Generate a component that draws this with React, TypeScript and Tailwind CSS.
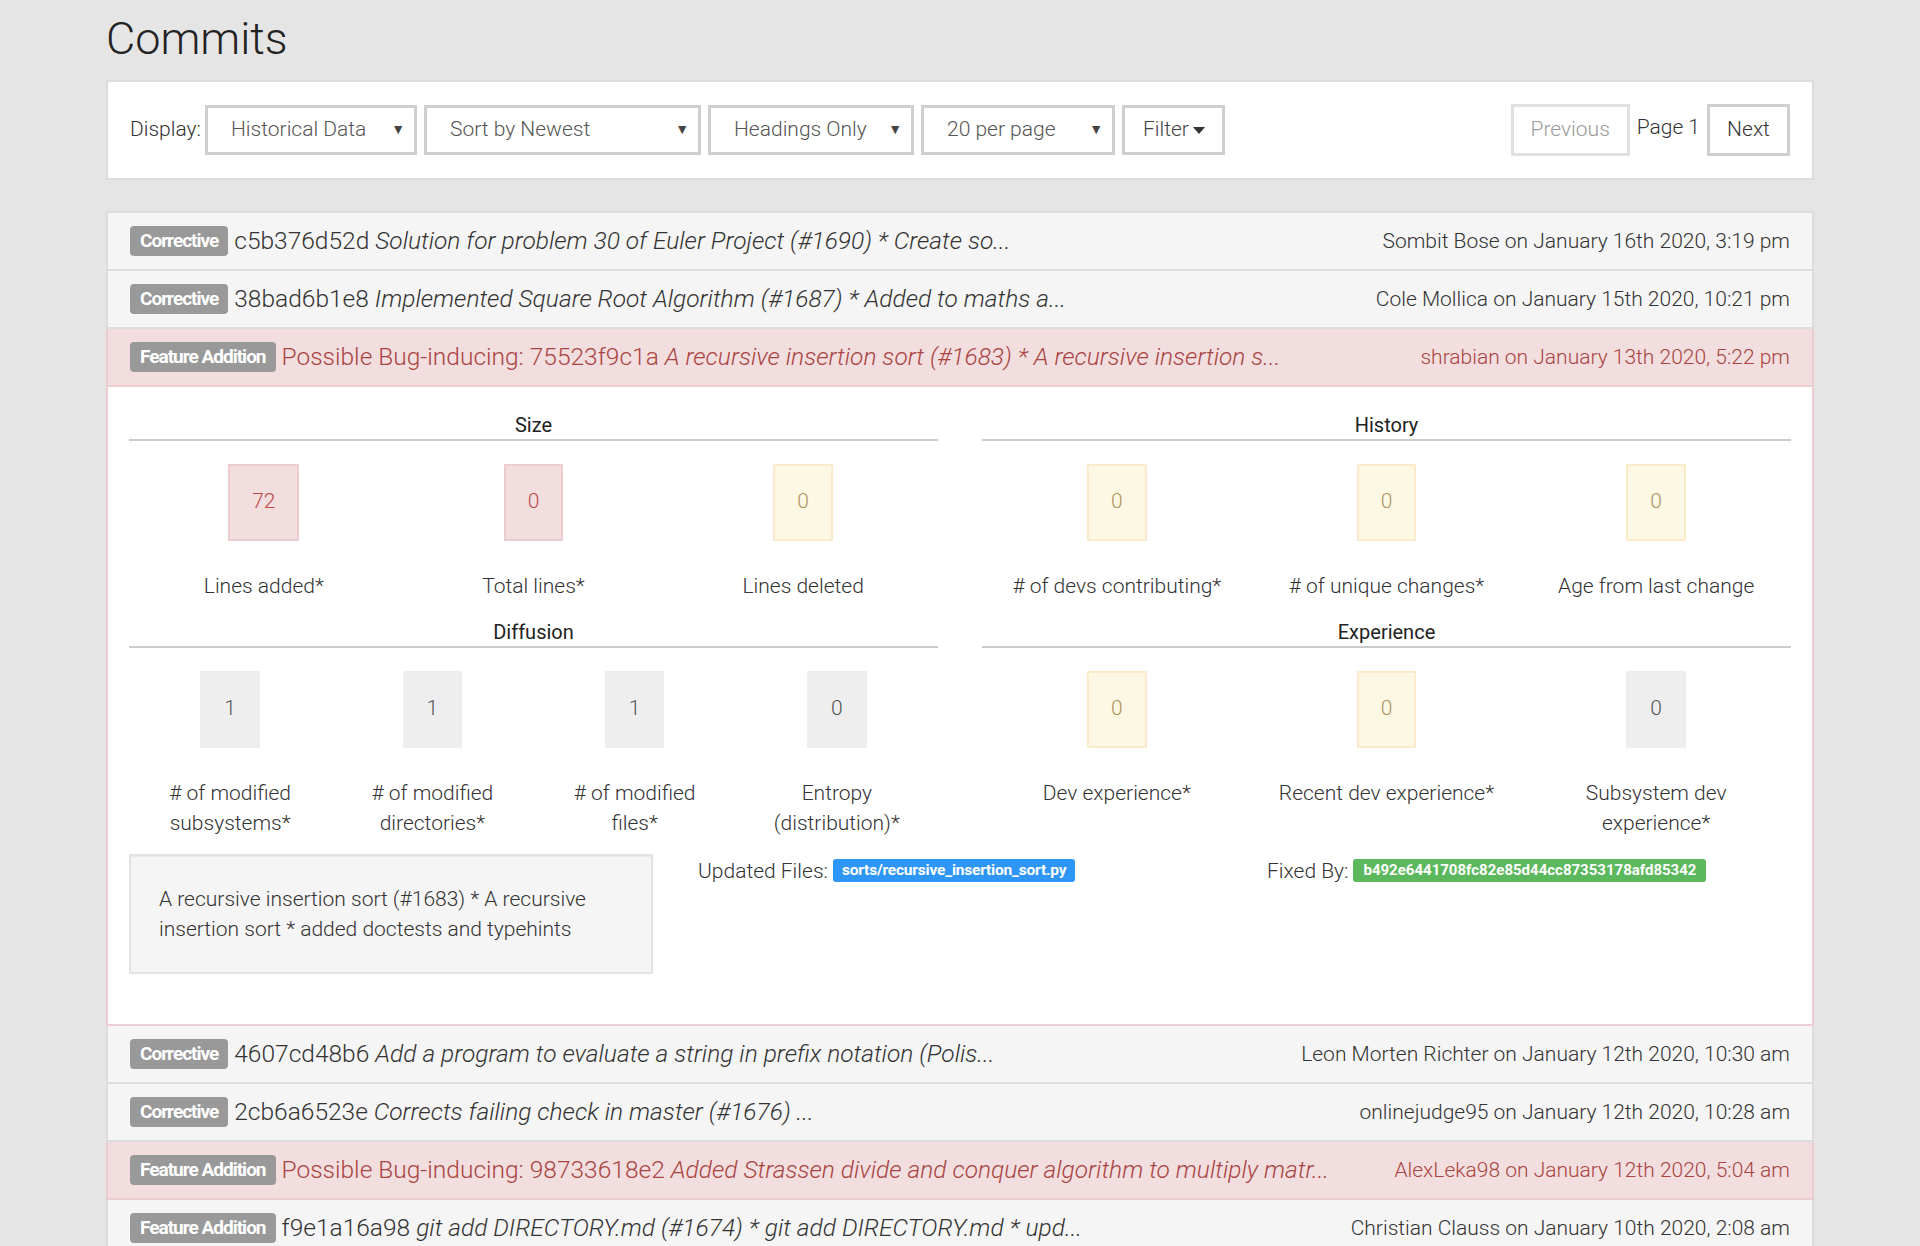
import clsx from 'clsx';

type Tone = 'red' | 'yellow' | 'gray';

interface CommitRow {
	kind: 'Corrective' | 'Feature Addition';
	bug?: boolean;
	hash: string;
	message: string;
	byline: string;
	expanded?: boolean;
}

const COMMITS: CommitRow[] = [
	{
		kind: 'Corrective',
		hash: 'c5b376d52d',
		message: 'Solution for problem 30 of Euler Project (#1690) * Create so...',
		byline: 'Sombit Bose on January 16th 2020, 3:19 pm',
	},
	{
		kind: 'Corrective',
		hash: '38bad6b1e8',
		message: 'Implemented Square Root Algorithm (#1687) * Added to maths a...',
		byline: 'Cole Mollica on January 15th 2020, 10:21 pm',
	},
	{
		kind: 'Feature Addition',
		bug: true,
		hash: '75523f9c1a',
		message: 'A recursive insertion sort (#1683) * A recursive insertion s...',
		byline: 'shrabian on January 13th 2020, 5:22 pm',
		expanded: true,
	},
	{
		kind: 'Corrective',
		hash: '4607cd48b6',
		message: 'Add a program to evaluate a string in prefix notation (Polis...',
		byline: 'Leon Morten Richter on January 12th 2020, 10:30 am',
	},
	{
		kind: 'Corrective',
		hash: '2cb6a6523e',
		message: 'Corrects failing check in master (#1676) ...',
		byline: 'onlinejudge95 on January 12th 2020, 10:28 am',
	},
	{
		kind: 'Feature Addition',
		bug: true,
		hash: '98733618e2',
		message: 'Added Strassen divide and conquer algorithm to multiply matr...',
		byline: 'AlexLeka98 on January 12th 2020, 5:04 am',
	},
	{
		kind: 'Feature Addition',
		hash: 'f9e1a16a98',
		message: 'git add DIRECTORY.md (#1674) * git add DIRECTORY.md * upd...',
		byline: 'Christian Clauss on January 10th 2020, 2:08 am',
	},
];

const SECTIONS: { title: string; cols: string; metrics: [string, string, Tone][] }[] = [
	{
		title: 'Size',
		cols: 'grid-cols-3',
		metrics: [
			['72', 'Lines added*', 'red'],
			['0', 'Total lines*', 'red'],
			['0', 'Lines deleted', 'yellow'],
		],
	},
	{
		title: 'History',
		cols: 'grid-cols-3',
		metrics: [
			['0', '# of devs contributing*', 'yellow'],
			['0', '# of unique changes*', 'yellow'],
			['0', 'Age from last change', 'yellow'],
		],
	},
	{
		title: 'Diffusion',
		cols: 'grid-cols-4',
		metrics: [
			['1', '# of modified subsystems*', 'gray'],
			['1', '# of modified directories*', 'gray'],
			['1', '# of modified files*', 'gray'],
			['0', 'Entropy (distribution)*', 'gray'],
		],
	},
	{
		title: 'Experience',
		cols: 'grid-cols-3',
		metrics: [
			['0', 'Dev experience*', 'yellow'],
			['0', 'Recent dev experience*', 'yellow'],
			['0', 'Subsystem dev experience*', 'gray'],
		],
	},
];

function Select({ label, width }: { label: string; width: string }) {
	return (
		<div
			className={clsx(
				'flex h-[50px] items-center justify-between border-[3px] border-[#cfcfcf] bg-white pl-[23px] pr-[9px] text-[#555]',
				width,
			)}
		>
			<span>{label}</span>
			<span className="text-[14px] text-[#444]">▼</span>
		</div>
	);
}

function Metric({ value, label, tone }: { value: string; label: string; tone: Tone }) {
	return (
		<div className="flex flex-col items-center px-[19px] text-center">
			<div
				className={clsx(
					'flex h-[77px] items-center border-2 px-[22px] text-[21px]',
					tone === 'red' && 'border-[#ebccd1] bg-[#f2dede] text-[#b94a48]',
					tone === 'yellow' && 'border-[#faebcc] bg-[#fcf8e3] text-[#ad9363]',
					tone === 'gray' && 'border-[#eeeeee] bg-[#eeeeee] text-[#555]',
				)}
			>
				{value}
			</div>
			<div className="mt-[30px] leading-[30px]">{label}</div>
		</div>
	);
}

function CommitDetails() {
	return (
		<div className="border-x-2 border-b-2 border-[#ebccd1] bg-white px-[21px] pb-[50px] pt-[24px]">
			<div className="grid grid-cols-2 gap-x-[44px] gap-y-[17px]">
				{SECTIONS.map((section) => (
					<div key={section.title}>
						<div className="border-b-2 border-[#cccccc] text-center text-[20px] font-normal leading-[28px] text-[#222]">
							{section.title}
						</div>
						<div className={clsx('mt-[23px] grid', section.cols)}>
							{section.metrics.map(([value, label, tone]) => (
								<Metric key={label} value={value} label={label} tone={tone} />
							))}
						</div>
					</div>
				))}
			</div>
			<div className="mt-[16px] grid grid-cols-3 gap-x-[45px]">
				<div className="border-2 border-[#e3e3e3] bg-[#f5f5f5] px-[28px] py-[28px] leading-[30px] shadow-[inset_0_1px_1px_rgba(0,0,0,0.05)]">
					A recursive insertion sort (#1683) * A recursive insertion sort * added doctests and
					typehints
				</div>
				<div className="mt-[2px] flex items-center gap-[5px] self-start leading-[30px]">
					<span>Updated Files:</span>
					<span className="rounded-[3px] bg-[#2d96f7] px-[9px] text-[15.5px] font-bold leading-[23px] tracking-[-0.2px] text-white">
						sorts/recursive_insertion_sort.py
					</span>
				</div>
				<div className="mt-[2px] flex items-center gap-[5px] self-start leading-[30px]">
					<span>Fixed By:</span>
					<span className="rounded-[3px] bg-[#5cb85c] px-[10px] text-[15px] font-bold leading-[23px] text-white">
						b492e6441708fc82e85d44cc87353178afd85342
					</span>
				</div>
			</div>
		</div>
	);
}

function CommitHeading({ commit, first }: { commit: CommitRow; first: boolean }) {
	return (
		<div
			className={clsx(
				'flex items-center justify-between border-x-2 border-b-2 px-[22px] py-[13px] leading-[30px]',
				first && 'border-t-2',
				commit.bug
					? 'border-[#ebccd1] bg-[#f2dede] text-[#a94442]'
					: 'border-[#dddddd] bg-[#f5f5f5] text-[#333]',
			)}
		>
			<div className="flex min-w-0 items-center gap-[6px] whitespace-nowrap">
				<span className="flex h-[30px] items-center rounded-[4px] bg-[#999] px-[10px] text-[19px] font-bold tracking-[-1px] text-white">
					{commit.kind}
				</span>
				<span className="text-[24.5px]">
					{commit.bug && 'Possible Bug-inducing: '}
					{commit.hash} <i>{commit.message}</i>
				</span>
			</div>
			<div className="whitespace-nowrap">{commit.byline}</div>
		</div>
	);
}

export default function App() {
	return (
		<div className="h-screen overflow-hidden bg-[#e5e5e5] font-['Roboto',sans-serif] text-[21px] font-light text-[#333]">
			<div className="mx-[106px] pt-[14px]">
				<h1 className="mb-[16px] text-[45px] font-light leading-[1.1] text-[#222]">Commits</h1>

				<div className="flex items-center justify-between border-2 border-[#dcdcdc] bg-white px-[22px] py-[22px]">
					<div className="flex items-center gap-[7px]">
						<span className="mr-[-3px]">Display:</span>
						<Select label="Historical Data" width="w-[212px]" />
						<Select label="Sort by Newest" width="w-[277px]" />
						<Select label="Headings Only" width="w-[206px]" />
						<Select label="20 per page" width="w-[194px]" />
						<div className="flex h-[50px] w-[103px] items-center border-[3px] border-[#cfcfcf] pl-[18px] text-[#444]">
							Filter
							<span className="ml-[4px] mt-[2px] inline-block border-x-[6px] border-t-[7px] border-x-transparent border-t-[#333]" />
						</div>
					</div>
					<div className="flex items-center gap-[7px]">
						<div className="flex h-[52px] w-[119px] items-center justify-center border-[3px] border-[#e0e0e0] text-[#9a9a9a]">
							Previous
						</div>
						<span className="-mt-[3px]">Page 1</span>
						<div className="flex h-[52px] w-[83px] items-center justify-center border-[3px] border-[#cfcfcf]">
							Next
						</div>
					</div>
				</div>

				<div className="mt-[31px] flex flex-col">
					{COMMITS.map((commit, i) => (
						<div key={commit.hash}>
							<CommitHeading commit={commit} first={i === 0} />
							{commit.expanded && <CommitDetails />}
						</div>
					))}
				</div>
			</div>
		</div>
	);
}
